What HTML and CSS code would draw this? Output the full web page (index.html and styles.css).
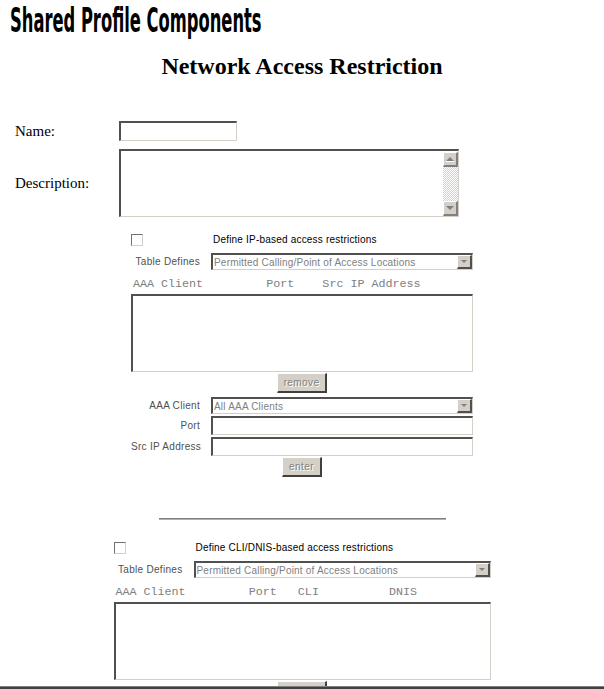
FILE: index.html
```html
<!DOCTYPE html>
<html lang="en">

<head>
  <meta charset="UTF-8">
  <title>Network Access Restriction</title>
  <link rel="stylesheet" href="styles.css">
</head>

<body>
  <div class="frame">
    <div class="brand"><span>Shared Profile Components</span></div>
    <h1>Network Access Restriction</h1>

    <div class="ident">
      <div class="ident-row">
        <label class="ident-label">Name:</label>
        <div class="sunken name-box"></div>
      </div>
      <div class="ident-row desc-row">
        <label class="ident-label">Description:</label>
        <div class="sunken memo">
          <div class="memo-text"></div>
          <div class="vscroll">
            <div class="scroll-btn"><span class="arrow-up"></span></div>
            <div class="scroll-track"></div>
            <div class="scroll-btn"><span class="arrow-down"></span></div>
          </div>
        </div>
      </div>
    </div>

    <!-- IP based restrictions -->
    <section class="restrict restrict-ip">
      <div class="check-row">
        <span class="lbl-cell"><span class="check"></span></span>
        <span class="check-text">Define IP-based access restrictions</span>
      </div>
      <div class="field-row combo-row">
        <span class="lbl">Table Defines</span>
        <div class="sunken combo">
          <span class="combo-text">Permitted Calling/Point of Access Locations</span>
          <span class="drop-btn"><span class="arrow-down"></span></span>
        </div>
      </div>
      <pre class="cols">AAA Client         Port    Src IP Address</pre>
      <div class="sunken listbox"></div>
      <div class="btn-row"><button class="btn" type="button">remove</button></div>
      <div class="field-row combo-row gap-4">
        <span class="lbl">AAA Client</span>
        <div class="sunken combo">
          <span class="combo-text">All AAA Clients</span>
          <span class="drop-btn"><span class="arrow-down"></span></span>
        </div>
      </div>
      <div class="field-row input-row">
        <span class="lbl">Port</span>
        <div class="sunken text-box"></div>
      </div>
      <div class="field-row input-row">
        <span class="lbl">Src IP Address</span>
        <div class="sunken text-box"></div>
      </div>
      <div class="btn-row"><button class="btn" type="button">enter</button></div>
    </section>

    <hr class="divider">

    <!-- CLI/DNIS based restrictions -->
    <section class="restrict restrict-cli">
      <div class="check-row">
        <span class="lbl-cell"><span class="check"></span></span>
        <span class="check-text">Define CLI/DNIS-based access restrictions</span>
      </div>
      <div class="field-row combo-row">
        <span class="lbl">Table Defines</span>
        <div class="sunken combo">
          <span class="combo-text">Permitted Calling/Point of Access Locations</span>
          <span class="drop-btn"><span class="arrow-down"></span></span>
        </div>
      </div>
      <pre class="cols">AAA Client         Port   CLI          DNIS</pre>
      <div class="sunken listbox"></div>
      <div class="btn-row"><button class="btn" type="button">remove</button></div>
    </section>
  </div>
  <div class="frame-edge"></div>
</body>
</html>
```

FILE: styles.css
```css
body {
  margin: 0;
  background: #fff;
  color: #000;
  font-family: "Liberation Serif", serif;
}

.frame {
  height: 686px;
  overflow: hidden;
}

.frame-edge {
  height: 1px;
  background: #808080;
  border-bottom: 2px solid #404040;
}

.brand {
  height: 40px;
  padding-left: 10px;
  font-family: "Liberation Sans Narrow", "DejaVu Sans Condensed", sans-serif;
  font-size: 33px;
  font-weight: bold;
  line-height: 42px;
  white-space: nowrap;
}

.brand span {
  display: inline-block;
  transform: scaleX(0.55);
  transform-origin: left center;
}

h1 {
  margin: 12px 0 0;
  height: 28px;
  font-size: 24px;
  line-height: 28px;
  text-align: center;
}

/* classic sunken / raised boxes */
.sunken {
  box-sizing: border-box;
  background: #fff;
  border-style: solid;
  border-width: 2px 1px 1px 2px;
  border-color: #505050 #d4d0c8 #d4d0c8 #505050;
}

.ident {
  margin-top: 41px;
}

.ident-row {
  display: flex;
  align-items: center;
}

.ident-label {
  width: 104px;
  padding-left: 15px;
  font-size: 15px;
}

.name-box {
  width: 118px;
  height: 20px;
}

.desc-row {
  margin-top: 8px;
}

.memo {
  display: flex;
  width: 340px;
  height: 68px;
}

.memo-text {
  flex: 1;
}

.vscroll {
  display: flex;
  flex-direction: column;
  width: 15px;
  margin-top: 1px;
}

.scroll-btn {
  display: flex;
  align-items: center;
  justify-content: center;
  box-sizing: border-box;
  height: 15px;
  background: #d4d0c8;
  border-style: solid;
  border-width: 1px 2px 2px 1px;
  border-color: #fff #808080 #808080 #fff;
}

.scroll-track {
  flex: 1;
  background: repeating-conic-gradient(#d4d0c8 0 25%, #fff 0 50%) 0 0 / 2px 2px;
}

.arrow-up,
.arrow-down {
  width: 0;
  height: 0;
  border-left: 4px solid transparent;
  border-right: 4px solid transparent;
}

.arrow-up {
  border-bottom: 4px solid #808080;
  box-shadow: 0 1px 0 #fff;
}

.arrow-down {
  border-top: 4px solid #808080;
}

/* restriction tables */
.restrict {
  display: flex;
  flex-direction: column;
  margin: 0 auto;
  font-family: "Liberation Sans", Arial, sans-serif;
  font-size: 10px;
}

.restrict-ip {
  width: 342px;
  margin-top: 16px;
}

.restrict-cli {
  width: 377px;
  margin-top: 21px;
}

.check-row {
  display: flex;
  align-items: center;
  height: 13px;
}

.lbl-cell {
  width: 80px;
  flex: none;
}

.check {
  display: block;
  box-sizing: border-box;
  width: 12px;
  height: 12px;
  border-style: solid;
  border-width: 1px;
  border-color: #707070 #d4d0c8 #d4d0c8 #707070;
}

.check-text {
  padding-left: 2px;
  letter-spacing: 0.2px;
}

.field-row {
  display: flex;
  align-items: center;
}

.lbl {
  width: 80px;
  flex: none;
  box-sizing: border-box;
  padding-right: 11px;
  text-align: right;
  color: #505050;
  letter-spacing: 0.3px;
  white-space: nowrap;
}

.combo-row {
  margin-top: 7px;
}

.combo-row.gap-4 {
  margin-top: 4px;
}

.combo {
  display: flex;
  align-items: center;
  flex: 1;
  height: 17px;
  padding-left: 1px;
}

.combo-text {
  flex: 1;
  color: #808080;
  letter-spacing: 0.2px;
  white-space: nowrap;
}

.drop-btn {
  display: flex;
  align-items: center;
  justify-content: center;
  box-sizing: border-box;
  width: 15px;
  height: 14px;
  background: #d4d0c8;
  border-style: solid;
  border-width: 1px 2px 2px 1px;
  border-color: #fff #505050 #505050 #fff;
}

.drop-btn .arrow-down {
  border-left-width: 3px;
  border-right-width: 3px;
  border-top-width: 3px;
}

.input-row {
  margin-top: 2px;
}

.text-box {
  flex: 1;
  height: 19px;
}

.cols {
  margin: 7px 0 0;
  padding-left: 2px;
  height: 14px;
  font-family: "Liberation Mono", "Courier New", monospace;
  font-size: 11.7px;
  line-height: 14px;
  color: #808080;
}

.listbox {
  margin-top: 3px;
  height: 78px;
}

.btn-row {
  display: flex;
  justify-content: center;
  margin-top: 1px;
}

.btn {
  box-sizing: border-box;
  height: 20px;
  padding: 0 6px;
  background: #d4d0c8;
  border-style: solid;
  border-width: 1px 2px 2px 1px;
  border-color: #fff #404040 #404040 #fff;
  font-family: "Liberation Sans", Arial, sans-serif;
  font-size: 10px;
  letter-spacing: 0.4px;
  color: #808080;
  text-shadow: 1px 1px 0 #fff;
}

.divider {
  width: 287px;
  height: 0;
  margin: 41px auto 0;
  border: 0;
  border-top: 1px solid #808080;
  border-bottom: 1px solid #b0b0b0;
}
```
